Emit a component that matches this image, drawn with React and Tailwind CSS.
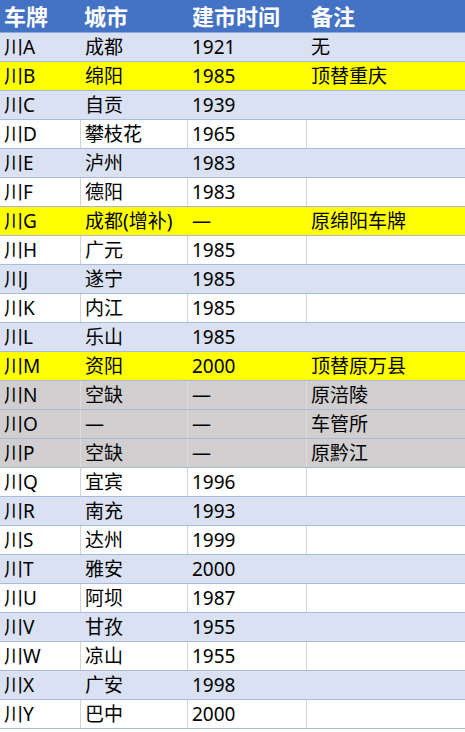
import React from 'react'

const rows = [
  ['川A', '成都', '1921', '无'],
  ['川B', '绵阳', '1985', '顶替重庆', 'yellow'],
  ['川C', '自贡', '1939', ''],
  ['川D', '攀枝花', '1965', ''],
  ['川E', '泸州', '1983', ''],
  ['川F', '德阳', '1983', ''],
  ['川G', '成都(增补)', '—', '原绵阳车牌', 'yellow'],
  ['川H', '广元', '1985', ''],
  ['川J', '遂宁', '1985', ''],
  ['川K', '内江', '1985', ''],
  ['川L', '乐山', '1985', ''],
  ['川M', '资阳', '2000', '顶替原万县', 'yellow'],
  ['川N', '空缺', '—', '原涪陵', 'gray'],
  ['川O', '—', '—', '车管所', 'gray'],
  ['川P', '空缺', '—', '原黔江', 'gray'],
  ['川Q', '宜宾', '1996', ''],
  ['川R', '南充', '1993', ''],
  ['川S', '达州', '1999', ''],
  ['川T', '雅安', '2000', ''],
  ['川U', '阿坝', '1987', ''],
  ['川V', '甘孜', '1955', ''],
  ['川W', '凉山', '1955', ''],
  ['川X', '广安', '1998', ''],
  ['川Y', '巴中', '2000', ''],
]

const cols = 'grid grid-cols-[80px_107px_119px_1fr]'

function rowStyle(i, fill) {
  if (fill === 'yellow') return { bg: 'bg-[#ffff00]', line: 'border-l border-[#ffff00]' }
  if (fill === 'gray') return { bg: 'bg-[#d0cece]', line: 'border-l border-[#dedcdc]' }
  if (i % 2 === 0) return { bg: 'bg-[#d9e1f2]', line: 'border-l border-[#d9e1f2]' }
  return { bg: 'bg-white', line: 'border-l border-[#d4d4d4]' }
}

export default function App() {
  return (
    <div className="w-[465px] h-[732px] bg-white text-black font-['Noto_Sans','Noto_Sans_CJK_SC',sans-serif]">
      <div className={`${cols} h-[33px] bg-[#4472c4] text-white font-bold text-[22px] border-b border-[#8ea9db]`}>
        <div className="flex items-center pl-1">车牌</div>
        <div className="flex items-center pl-1">城市</div>
        <div className="flex items-center pl-[5px]">建市时间</div>
        <div className="flex items-center pl-[5px]">备注</div>
      </div>
      {rows.map((r, i) => {
        const s = rowStyle(i, r[4])
        return (
          <div key={r[0]} className={`${cols} h-[29px] text-[19px] border-b border-[#a9bbdc] ${s.bg}`}>
            <div className="flex items-center pl-1 leading-none">{r[0]}</div>
            <div className={`flex items-center pl-1 leading-none ${s.line}`}>{r[1]}</div>
            <div className={`flex items-center pl-[4px] leading-none ${s.line}`}>{r[2]}</div>
            <div className={`flex items-center pl-[4px] leading-none ${s.line}`}>{r[3]}</div>
          </div>
        )
      })}
    </div>
  )
}
